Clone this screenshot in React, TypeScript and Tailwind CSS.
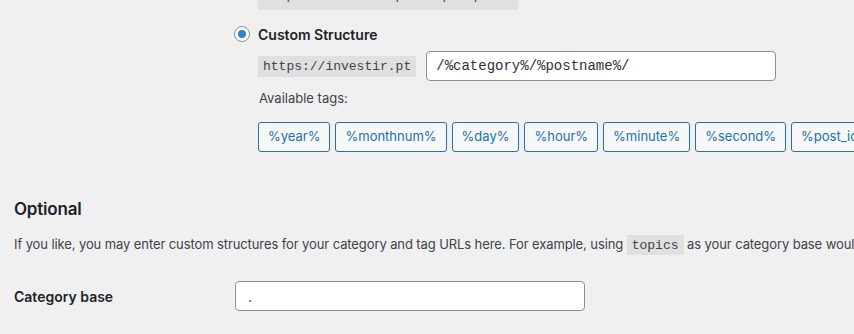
import * as React from "react";

const tags = ["%year%", "%monthnum%", "%day%", "%hour%", "%minute%", "%second%", "%post_id%", "%postname%", "%category%", "%author%"];

function Code({children, className = ""}: {children: React.ReactNode; className?: string}) {
    return (
        <code className={`bg-[#e0e0e1] px-[5px] pt-[3px] pb-[2px] font-['Liberation_Mono',monospace] text-[13px] tracking-normal text-[#3c434a] ${className}`}>
            {children}
        </code>
    )
}

function TagButton({label}: {label: string}) {
    return (
        <button className="h-[30px] shrink-0 rounded-[3px] border border-[#2271b1] bg-[#f6f7f7] px-[9px] text-[13px] text-[#2271b1]">
            {label}
        </button>
    )
}

export default function App() {
    return (
        <div className="h-[334px] w-[854px] overflow-hidden bg-[#f0f0f1] pl-[14px] font-['Inter',sans-serif] text-[13px] text-[#3c434a]">
            {/* permalink structure row */}
            <div className="flex">
                <div className="w-[220px] shrink-0"/>
                <div className="flex min-w-0 flex-col">
                    <div className="-mt-[15px] flex h-[25px] items-start pl-[24px]">
                        <Code className="block pb-[6px] leading-[16px]">https://investir.pt/sample-post/</Code>
                    </div>
                    <label className="mt-[14px] flex h-[20px] items-center gap-[8px]">
                        <span className="flex h-[16px] w-[16px] items-center justify-center rounded-full border border-[#8c8f94] bg-white">
                            <span className="h-[8px] w-[8px] rounded-full bg-[#3582c4]"/>
                        </span>
                        <span className="text-[14px] font-semibold text-[#1d2327]">Custom Structure</span>
                    </label>
                    <div className="mt-[7px] flex items-center gap-[10px] pl-[24px]">
                        <Code className="leading-[16px]">https://investir.pt</Code>
                        <input
                            readOnly
                            value="/%category%/%postname%/"
                            className="h-[30px] w-[350px] rounded-[4px] border border-[#8c8f94] bg-white px-[9px] font-['Liberation_Mono',monospace] text-[14px] text-[#2c3338] outline-none"
                        />
                    </div>
                    <div className="mt-[8px] h-[18px] pl-[25px] leading-[18px]">Available tags:</div>
                    <div className="mt-[15px] flex gap-[5px] pl-[24px]">
                        {tags.map((tag) => <TagButton key={tag} label={tag}/>)}
                    </div>
                </div>
            </div>

            {/* optional section */}
            <h2 className="mt-[45px] h-[24px] text-[17px] font-semibold leading-[24px] tracking-[-0.2px] text-[#1d2327]">Optional</h2>
            <p className="mt-[13px] whitespace-nowrap leading-[20px] tracking-[-0.1px]">
                If you like, you may enter custom structures for your category and tag URLs here. For example, using <Code>topics</Code> as your category base would make your category links like <Code>https://investir.pt/topics/uncategorized/</Code>.
            </p>
            <div className="mt-[25px] flex items-center">
                <label className="w-[221px] shrink-0 text-[14px] font-semibold text-[#1d2327]">Category base</label>
                <input
                    readOnly
                    value="."
                    className="h-[30px] w-[350px] rounded-[4px] border border-[#8c8f94] bg-white px-[12px] text-[14px] text-[#2c3338] outline-none"
                />
            </div>
        </div>
    )
}
